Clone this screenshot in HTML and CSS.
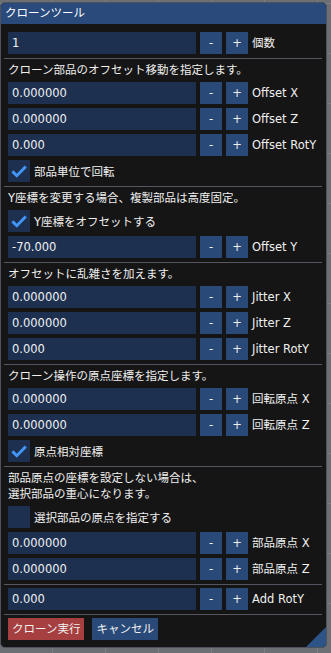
FILE: index.html
```html
<!DOCTYPE html>
<html lang="ja">
<head>
  <meta charset="UTF-8">
  <meta name="viewport" content="width=device-width, initial-scale=1">
  <title>クローンツール</title>
  <link rel="stylesheet" href="styles.css">
</head>
<body>

  <div class="window">
    <div class="title">クローンツール</div>

    <div class="content">
      <div class="row">
        <input class="field" type="text" value="1">
        <button class="btn">-</button><button class="btn">+</button>
        <span class="label">個数</span>
      </div>

      <div class="sep"></div>
      <div class="text">クローン部品のオフセット移動を指定します。</div>
      <div class="row">
        <input class="field" type="text" value="0.000000">
        <button class="btn">-</button><button class="btn">+</button>
        <span class="label">Offset X</span>
      </div>
      <div class="row">
        <input class="field" type="text" value="0.000000">
        <button class="btn">-</button><button class="btn">+</button>
        <span class="label">Offset Z</span>
      </div>
      <div class="row">
        <input class="field" type="text" value="0.000">
        <button class="btn">-</button><button class="btn">+</button>
        <span class="label">Offset RotY</span>
      </div>
      <label class="check">
        <span class="box"><svg width="22" height="22" viewBox="0 0 22 22"><polyline points="4.4,11.4 8.8,15.8 17.8,6.6" /></svg></span>
        部品単位で回転
      </label>

      <div class="sep"></div>
      <div class="text">Y座標を変更する場合、複製部品は高度固定。</div>
      <label class="check">
        <span class="box"><svg width="22" height="22" viewBox="0 0 22 22"><polyline points="4.4,11.4 8.8,15.8 17.8,6.6" /></svg></span>
        Y座標をオフセットする
      </label>
      <div class="row">
        <input class="field" type="text" value="-70.000">
        <button class="btn">-</button><button class="btn">+</button>
        <span class="label">Offset Y</span>
      </div>

      <div class="sep"></div>
      <div class="text">オフセットに乱雑さを加えます。</div>
      <div class="row">
        <input class="field" type="text" value="0.000000">
        <button class="btn">-</button><button class="btn">+</button>
        <span class="label">Jitter X</span>
      </div>
      <div class="row">
        <input class="field" type="text" value="0.000000">
        <button class="btn">-</button><button class="btn">+</button>
        <span class="label">Jitter Z</span>
      </div>
      <div class="row">
        <input class="field" type="text" value="0.000">
        <button class="btn">-</button><button class="btn">+</button>
        <span class="label">Jitter RotY</span>
      </div>

      <div class="sep"></div>
      <div class="text">クローン操作の原点座標を指定します。</div>
      <div class="row">
        <input class="field" type="text" value="0.000000">
        <button class="btn">-</button><button class="btn">+</button>
        <span class="label">回転原点 X</span>
      </div>
      <div class="row">
        <input class="field" type="text" value="0.000000">
        <button class="btn">-</button><button class="btn">+</button>
        <span class="label">回転原点 Z</span>
      </div>
      <label class="check">
        <span class="box"><svg width="22" height="22" viewBox="0 0 22 22"><polyline points="4.4,11.4 8.8,15.8 17.8,6.6" /></svg></span>
        原点相対座標
      </label>

      <div class="sep"></div>
      <div class="text">部品原点の座標を設定しない場合は、<br>選択部品の重心になります。</div>
      <label class="check">
        <span class="box"></span>
        選択部品の原点を指定する
      </label>
      <div class="row">
        <input class="field" type="text" value="0.000000">
        <button class="btn">-</button><button class="btn">+</button>
        <span class="label">部品原点 X</span>
      </div>
      <div class="row">
        <input class="field" type="text" value="0.000000">
        <button class="btn">-</button><button class="btn">+</button>
        <span class="label">部品原点 Z</span>
      </div>

      <div class="sep"></div>
      <div class="row">
        <input class="field" type="text" value="0.000">
        <button class="btn">-</button><button class="btn">+</button>
        <span class="label">Add RotY</span>
      </div>

      <div class="sep"></div>
      <div class="actions">
        <button class="btn btn-wide btn-red">クローン実行</button>
        <button class="btn btn-wide">キャンセル</button>
      </div>
    </div>

    <div class="grip"></div>
  </div>

</body>
</html>
```

FILE: styles.css
```css
body {
  margin: 0;
  height: 653px;
  overflow: hidden;
  background-color: #6c7075;
  background-image:
    repeating-linear-gradient(90deg, transparent 0 52px, #7b7f84 52px 53px, transparent 53px 51px),
    repeating-linear-gradient(0deg, transparent 0 49px, #7b7f84 49px 50px);
  font-family: "DejaVu Sans", "Noto Sans CJK JP", sans-serif;
  font-size: 11.5px;
  color: #f0f0f0;
}
.window {
  position: relative;
  box-sizing: border-box;
  width: 327px;
  margin-top: 2px;
  background-color: #151515;
  border: 1px solid #4e525a;
  border-radius: 5px;
  overflow: hidden;
}
.title {
  height: 21px;
  line-height: 21px;
  padding-left: 4px;
  background-color: #294a7a;
  color: #ffffff;
}
.content {
  display: flex;
  flex-direction: column;
  gap: 4px;
  padding: 8px 7px 7px 7px;
}
.sep {
  height: 1px;
  margin: 0 -3px -1px -4px;
  background-color: #55565f;
}
.text {
  line-height: 16px;
}
.row {
  display: flex;
  align-items: center;
  gap: 4px;
  height: 22px;
}
.field {
  box-sizing: border-box;
  width: 188px;
  height: 22px;
  margin: 0;
  padding: 0 4px;
  border: none;
  outline: none;
  background-color: #1e3050;
  font-family: inherit;
  font-size: inherit;
  color: #f0f0f0;
}
.btn {
  box-sizing: border-box;
  width: 22px;
  height: 22px;
  margin: 0;
  padding: 0;
  border: none;
  background-color: #294a78;
  font-family: inherit;
  font-size: inherit;
  line-height: 22px;
  color: #f0f0f0;
  text-align: center;
}
.label {
  line-height: 22px;
  white-space: nowrap;
}
.check {
  display: flex;
  align-items: center;
  gap: 4px;
  height: 22px;
}
.box {
  display: block;
  width: 22px;
  height: 22px;
  background-color: #1e3050;
}
.box svg {
  display: block;
}
.box polyline {
  fill: none;
  stroke: #4296fa;
  stroke-width: 2.9;
}
.actions {
  display: flex;
  gap: 8px;
}
.btn-wide {
  width: auto;
  padding: 0 4px;
}
.btn-red {
  background-color: #a63f40;
}
.grip {
  position: absolute;
  right: 0;
  bottom: 0;
  width: 20px;
  height: 20px;
  background-color: #2d5486;
  clip-path: polygon(100% 0, 100% 100%, 0 100%);
}
```
